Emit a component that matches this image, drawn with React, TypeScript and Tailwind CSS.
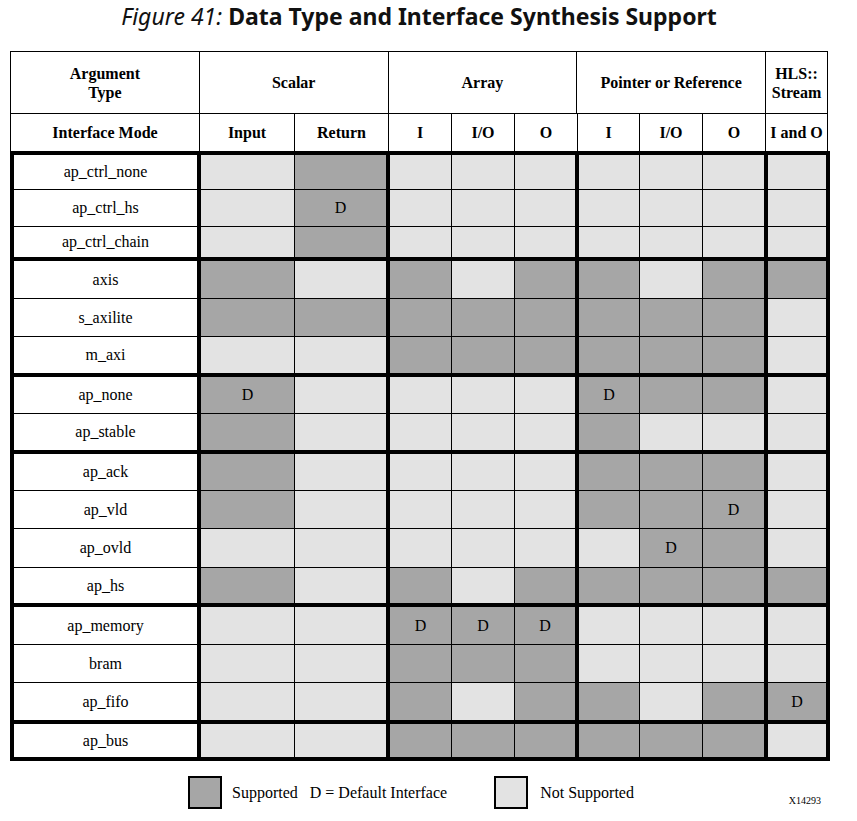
// Data Type and Interface Synthesis Support figure
type Cell = "S" | "N" | "D";

// body columns: width + gap on the left (black shows through as the rule)
const bodyCols = [
  "w-[183px]",
  "w-[93px] ml-[4px]",
  "w-[91px] ml-px",
  "w-[61px] ml-[4px]",
  "w-[62px] ml-px",
  "w-[60px] ml-px",
  "w-[60px] ml-[4px]",
  "w-[62px] ml-px",
  "w-[61px] ml-px",
  "w-[58px] ml-[4px]",
];

const heights: Record<number, string> = {
  30: "h-[30px]",
  33: "h-[33px]",
  34: "h-[34px]",
  35: "h-[35px]",
  36: "h-[36px]",
  37: "h-[37px]",
  38: "h-[38px]",
};

const groups: [string, string, number][][] = [
  [
    ["ap_ctrl_none", "NSNNNNNNN", 34],
    ["ap_ctrl_hs", "NDNNNNNNN", 36],
    ["ap_ctrl_chain", "NSNNNNNNN", 30],
  ],
  [
    ["axis", "SNSNSSNSS", 37],
    ["s_axilite", "SSSSSSSSN", 37],
    ["m_axi", "NNSSSSSSN", 36],
  ],
  [
    ["ap_none", "DNNNNDSSN", 36],
    ["ap_stable", "SNNNNSNNN", 36],
  ],
  [
    ["ap_ack", "SNNNNSSSN", 36],
    ["ap_vld", "SNNNNSSDN", 37],
    ["ap_ovld", "NNNNNNDSN", 38],
    ["ap_hs", "SNSNSSSSS", 35],
  ],
  [
    ["ap_memory", "NNDDDNNNN", 37],
    ["bram", "NNSSSNNNN", 37],
    ["ap_fifo", "NNSNSSNSD", 37],
  ],
  [["ap_bus", "NNSSSSSSN", 33]],
];

function BodyRow({ name, cells, h }: { name: string; cells: string; h: number }) {
  return (
    <div className={`flex ${heights[h]}`}>
      <div className={`${bodyCols[0]} bg-white flex items-center justify-center`}>{name}</div>
      {cells.split("").map((c, i) => {
        const v = c as Cell;
        return (
          <div
            key={i}
            className={`${bodyCols[i + 1]} flex items-center justify-center ${
              v === "N" ? "bg-[#e3e3e3]" : "bg-[#a6a6a6]"
            }`}
          >
            {v === "D" ? "D" : null}
          </div>
        );
      })}
    </div>
  );
}

export default function App() {
  return (
    <div className="bg-white min-h-[821px] w-[857px] pl-[10px] text-black font-['Liberation_Serif',serif]">
      <h1 className="w-[818px] text-center text-[23px] leading-[30px] text-[#111] pt-px font-['Noto_Sans',sans-serif]">
        <span className="italic">Figure 41:</span> <span className="font-bold">Data Type and Interface Synthesis Support</span>
      </h1>

      {/* header: thin rules */}
      <div className="mt-[20px] w-[818px] bg-black pt-px px-px font-bold text-[16px]">
        <div className="flex h-[61px] leading-[19px]">
          <div className="w-[188px] bg-white flex items-center justify-center text-center">
            Argument
            <br />
            Type
          </div>
          <div className="w-[188px] ml-px bg-white flex items-center justify-center">Scalar</div>
          <div className="w-[188px] ml-px bg-white flex items-center justify-center">Array</div>
          <div className="w-[188px] ml-px bg-white flex items-center justify-center">Pointer or Reference</div>
          <div className="w-[61px] ml-px bg-white flex items-center justify-center text-center">
            HLS::
            <br />
            Stream
          </div>
        </div>
        <div className="flex h-[37px] mt-px">
          <div className="w-[188px] bg-white flex items-center justify-center">Interface Mode</div>
          <div className="w-[94px] ml-px bg-white flex items-center justify-center">Input</div>
          <div className="w-[93px] ml-px bg-white flex items-center justify-center">Return</div>
          <div className="w-[62px] ml-px bg-white flex items-center justify-center">I</div>
          <div className="w-[62px] ml-px bg-white flex items-center justify-center">I/O</div>
          <div className="w-[62px] ml-px bg-white flex items-center justify-center">O</div>
          <div className="w-[61px] ml-px bg-white flex items-center justify-center">I</div>
          <div className="w-[62px] ml-px bg-white flex items-center justify-center">I/O</div>
          <div className="w-[62px] ml-px bg-white flex items-center justify-center">O</div>
          <div className="w-[61px] ml-px bg-white flex items-center justify-center whitespace-nowrap">I and O</div>
        </div>
      </div>

      {/* body: thick group rules */}
      <div className="w-[820px] bg-black p-[4px] flex flex-col gap-[4px] text-[16px]">
        {groups.map((g, gi) => (
          <div key={gi} className="flex flex-col gap-px">
            {g.map(([name, cells, h]) => (
              <BodyRow key={name} name={name} cells={cells} h={h} />
            ))}
          </div>
        ))}
      </div>

      {/* legend */}
      <div className="w-[818px] flex items-end mt-[15px] text-[16px]">
        <div className="flex items-center pl-[178px]">
          <div className="w-[34px] h-[33px] border-2 border-black bg-[#a6a6a6]" />
          <span className="ml-[10px] whitespace-pre">Supported   D = Default Interface</span>
          <div className="ml-[47px] w-[34px] h-[33px] border-2 border-black bg-[#e3e3e3]" />
          <span className="ml-[12px]">Not Supported</span>
        </div>
        <span className="ml-auto text-[10px] leading-[12px] mb-[2px] pr-[7px]">X14293</span>
      </div>
    </div>
  );
}
